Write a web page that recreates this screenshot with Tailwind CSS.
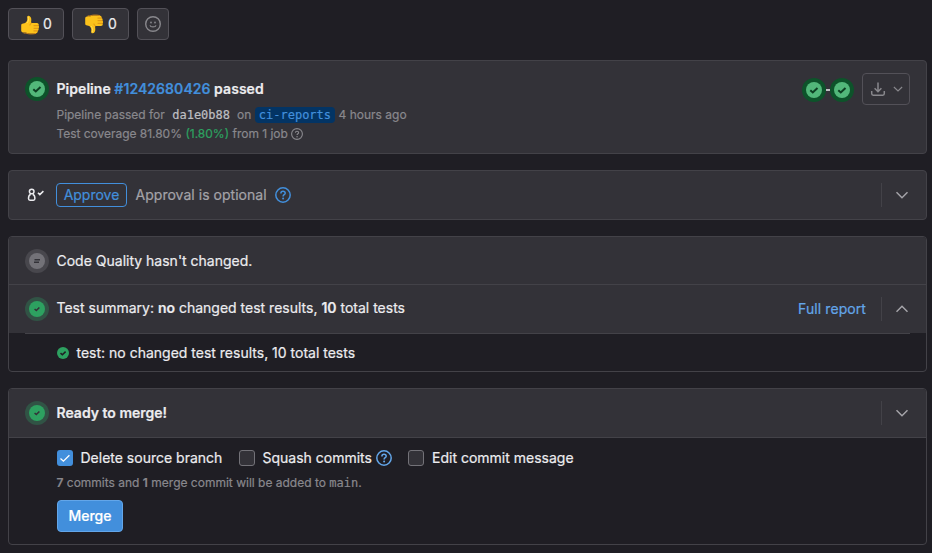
<!DOCTYPE html>
<html lang="en">
<head>
<meta charset="utf-8">
<title>Merge request</title>
<script src="https://cdn.jsdelivr.net/npm/@tailwindcss/browser@4"></script>
</head>
<body class="h-[553px] w-[932px] overflow-hidden bg-[#1f1e24] pl-2 pt-2 font-['Inter','Liberation_Sans',sans-serif] text-[14px] leading-5 text-[#ececef] whitespace-nowrap [-webkit-text-stroke:0.2px]">
<svg class="hidden">
  <symbol id="thumb" viewBox="0 0 20 20">
    <path fill="#fcc21b" d="M1.200 10.200c0-1 .8-1.600 2-1.700 1.600-.1 2.500-.6 3.400-1.900.7-1 .8-2 .6-3.600C7 1.400 7.700.6 8.600.7c1.800.2 2.900 2.300 2.700 4.400L11 8h5.700c1.900 0 2.600 1.600 1.700 2.600 1 .7.900 2.200-.1 2.700.7.900.3 2.200-.7 2.600.4 1.200-.3 2.200-1.800 2.300-2.900.3-6.200.5-8.600-.3-1.200-.4-2.700-.3-4.200-.4-1.100-.1-1.800-.8-1.800-1.900z"/>
    <path fill="none" stroke="#d98a13" stroke-width=".9" stroke-linecap="round" d="M18.300 10.700h-4.300M18.200 13.300h-4.200M17.400 15.900h-3.500M11.400 8c-.9.500-1.300 1.200-1.400 2M4 18c2.500 0 3.300.8 5.800.9 2 .1 4.200 0 6-.4"/>
    <path fill="none" stroke="#fde06a" stroke-width=".9" stroke-linecap="round" d="M8.300 2c.7 2.300.200 4.100-1 5.600"/>
  </symbol>
  <symbol id="pass" viewBox="0 0 24 24">
    <circle cx="12" cy="12" r="12" fill="#0d532a"/><circle cx="12" cy="12" r="8" fill="#52b87a"/>
    <path d="M8.300 12.200l2.500 2.300 4.700-4.500" fill="none" stroke="#0d4023" stroke-width="2"/>
  </symbol>
  <symbol id="ok" viewBox="0 0 24 24">
    <circle cx="12" cy="12" r="12" fill="#315345"/><circle cx="12" cy="12" r="8" fill="#2da160"/>
    <path d="M9.600 12l1.700 1.500 3.100-3" fill="none" stroke="#333238" stroke-width="1.600"/>
  </symbol>
  <symbol id="help" viewBox="0 0 16 16">
    <circle cx="8" cy="8" r="7.200" fill="none" stroke="currentColor" stroke-width="1.500"/>
    <path d="M5.900 6.400C5.900 5 6.800 4.300 8 4.300s2.200.8 2.200 1.900c0 1.500-2.100 1.500-2.100 3.200" fill="none" stroke="currentColor" stroke-width="1.500"/><circle cx="8.100" cy="11.500" r="1" fill="currentColor"/>
  </symbol>
  <symbol id="chev" viewBox="0 0 16 16"><path d="M2.500 5.300L8 10.700l5.500-5.400" fill="none" stroke="currentColor" stroke-width="1.500"/></symbol>
</svg>

<div class="flex h-8 gap-2">
  <button class="flex h-8 w-14 items-center rounded border border-[#535158] bg-[#333238] pl-[11px]"><svg class="mt-px h-5 w-5"><use href="#thumb"/></svg><span class="ml-[3px]">0</span></button>
  <button class="flex h-8 w-[57px] items-center rounded border border-[#535158] bg-[#333238] pl-[11px]"><svg class="h-5 w-5 -scale-y-100"><use href="#thumb"/></svg><span class="ml-1">0</span></button>
  <button class="flex size-8 items-center justify-center rounded border border-[#535158] bg-[#333238] text-[#89888d]">
    <svg class="size-4" viewBox="0 0 16 16" fill="none" stroke="currentColor"><circle cx="8" cy="8" r="7.300" stroke-width="1.400"/><path d="M5 9.300c.6 2.200 5.400 2.200 6 0" stroke-width="1.300"/><circle cx="6" cy="6.500" r=".9" fill="currentColor" stroke="none"/><circle cx="10" cy="6.500" r=".9" fill="currentColor" stroke="none"/></svg>
  </button>
</div>

<section class="mt-5 flex h-[94px] w-[919px] rounded border border-[#434248] bg-[#333238] pl-4">
  <svg class="mt-4 size-6"><use href="#pass"/></svg>
  <div class="ml-[7.500px] flex-1 pt-[18px]">
    <p class="h-5 font-semibold tracking-[0.05px]">Pipeline <span class="text-[#428fdc]">#1242680426</span> passed</p>
    <div class="mt-[6px] flex h-[19px] items-center text-[12px] text-[#89888d]"><span class="tracking-[-0.02px]">Pipeline passed for</span><span class="ml-[7.500px] font-['DejaVu_Sans_Mono',monospace] text-[#bfbfc3]">da1e0b88</span><span class="ml-[7px]">on</span><span class="ml-[3.500px] flex h-4 items-center rounded bg-[#033464] px-1 font-['DejaVu_Sans_Mono',monospace] text-[#428fdc]">ci-reports</span><span class="ml-[3.500px]">4 hours ago</span></div>
    <div class="flex h-[19px] items-center text-[12px] text-[#89888d]"><span class="tracking-[-0.03px]">Test coverage 81.80%</span><span class="ml-[3.500px] text-[#2da160]">(1.80%)</span><span class="ml-[3.500px] tracking-[-0.03px]">from 1 job</span><svg class="ml-[3px] size-3"><use href="#help"/></svg></div>
  </div>
  <div class="mr-4 mt-3 flex h-8 items-center">
    <svg class="mt-0.5 size-6"><use href="#pass"/></svg><span class="mt-px h-0.5 w-1 bg-[#bfbfc3]"></span><svg class="mt-0.5 size-6"><use href="#pass"/></svg>
    <button class="ml-2 flex h-8 w-12 items-center rounded border border-[#535158] pl-[7px] text-[#89888d]">
      <svg class="size-4" viewBox="0 0 16 16" fill="none" stroke="currentColor" stroke-width="1.500"><path d="M1.700 10v2.500c0 1 .5 1.700 1.500 1.700h9.600c1 0 1.500-.7 1.500-1.700V10M8 1.500v9M4.600 7.300L8 10.700l3.400-3.400"/></svg>
      <svg class="-mr-1 -mt-px ml-1.5 size-3" stroke-width="2"><use href="#chev"/></svg>
    </button>
  </div>
</section>

<section class="mt-4 flex h-[50px] w-[919px] items-center rounded border border-[#434248] bg-[#333238] pl-[18px] pr-4">
  <svg class="h-4 w-[18px]" viewBox="0 0 18 16" fill="none" stroke="#ececef" stroke-width="1.500"><circle cx="4.700" cy="4.500" r="2.300"/><path d="M3.700 7.300C1.900 8 1.500 9.700 1.500 11.500c0 1.100.5 1.700 1.500 1.700h3.400c1 0 1.500-.6 1.500-1.700 0-1.800-.4-3.500-2.200-4.200M10.900 5.800l1.900 1.800 3.600-3.500"/></svg>
  <button class="ml-[11px] flex h-6 w-[71px] items-center justify-center rounded border border-[#428fdc] text-[#428fdc]">Approve</button>
  <span class="ml-[8.500px] tracking-[0.03px] text-[#a4a3a8]">Approval is optional</span>
  <svg class="ml-2 size-4 text-[#428fdc]"><use href="#help"/></svg>
  <span class="ml-auto h-6 w-px bg-[#434248]"></span>
  <svg class="ml-[12px] size-4 text-[#a4a3a8]"><use href="#chev"/></svg>
</section>

<section class="mt-4 h-[136px] w-[919px] overflow-hidden rounded border border-[#434248]">
  <div class="flex h-12 items-center border-b border-[#434248] bg-[#333238] pl-4">
    <svg class="size-6" viewBox="0 0 24 24"><circle cx="12" cy="12" r="12" fill="#48474d"/><circle cx="12" cy="12" r="8" fill="#737278"/><path d="M9.500 10.800h5.500M9 13.200h5" stroke="#333238" stroke-width="1.400"/></svg>
    <span class="ml-[7.500px]">Code Quality hasn't changed.</span>
  </div>
  <div class="flex h-12 items-center bg-[#333238] pl-4 pr-4">
    <svg class="size-6"><use href="#ok"/></svg>
    <span class="-mt-0.5 ml-[7.500px]">Test summary: <b class="font-semibold">no</b> changed test results, <b class="font-semibold">10</b> total tests</span>
    <span class="ml-auto tracking-[0.08px] text-[#63a6e9]">Full report</span>
    <span class="ml-[15px] h-6 w-px bg-[#434248]"></span>
    <svg class="ml-[12px] size-4 rotate-180 text-[#a4a3a8]"><use href="#chev"/></svg>
  </div>
  <div class="h-px bg-[#1f1e24]"><div class="mx-4 h-px bg-[#434248]"></div></div>
  <div class="flex h-[37px] items-center pl-12">
    <svg class="size-3" viewBox="0 0 12 12"><circle cx="6" cy="6" r="6" fill="#2da160"/><path d="M3.500 6.100l1.900 1.700 3.200-3.200" fill="none" stroke="#1f1e24" stroke-width="1.500"/></svg>
    <span class="ml-[7.500px]">test: no changed test results, 10 total tests</span>
  </div>
</section>

<section class="mt-4 h-[157px] w-[919px] overflow-hidden rounded border border-[#434248]">
  <div class="flex h-[49px] items-center border-b border-[#434248] bg-[#333238] pl-4 pr-4">
    <svg class="size-6"><use href="#ok"/></svg>
    <span class="ml-[7.500px] font-semibold">Ready to merge!</span>
    <span class="ml-auto h-6 w-px bg-[#434248]"></span>
    <svg class="ml-[12px] size-4 text-[#a4a3a8]"><use href="#chev"/></svg>
  </div>
  <div class="pl-12 pt-[10px]">
    <div class="flex h-5 items-center">
      <span class="flex size-4 items-center justify-center rounded-[3px] bg-[#428fdc]"><svg class="size-4" viewBox="0 0 16 16"><path d="M3.500 8.500l2.900 2.700 6-6" fill="none" stroke="#fff" stroke-width="1.300"/></svg></span>
      <span class="ml-[7.500px] w-[142.500px]">Delete source branch</span>
      <span class="ml-4 size-4 rounded-[3px] border border-[#737278] bg-[#333238]"></span>
      <span class="ml-[7.500px] w-[109.500px]">Squash commits</span>
      <svg class="ml-1 size-4 text-[#63a6e9]"><use href="#help"/></svg>
      <span class="ml-4 size-4 rounded-[3px] border border-[#737278] bg-[#333238]"></span>
      <span class="ml-2">Edit commit message</span>
    </div>
    <p class="-ml-[0.5px] mt-[5px] text-[12px] leading-5 text-[#89888d]"><b class="font-semibold">7</b> commits and <b class="font-semibold">1</b> merge commit will be added to <span class="font-['DejaVu_Sans_Mono',monospace]">main</span>.</p>
    <button class="mt-[7px] flex h-8 w-[66px] items-center justify-center rounded border border-[#63a6e9] bg-[#428fdc] font-medium text-white">Merge</button>
  </div>
</section>
</body>
</html>
